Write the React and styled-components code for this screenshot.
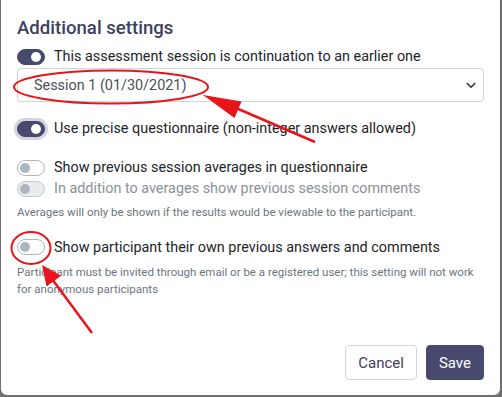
import React from "react";
import styled, { createGlobalStyle, css } from "styled-components";

const GlobalStyle = createGlobalStyle`
  html, body {
    margin: 0;
    padding: 0;
    background: #6f6f6f;
    overflow: hidden;
  }
  * {
    box-sizing: border-box;
  }
`;

const Backdrop = styled.div`
  position: relative;
  width: 502px;
  height: 397px;
  padding: 0 2px 2px 1px;
  font-family: Roboto, "Liberation Sans", sans-serif;
`;

const Dialog = styled.div`
  width: 499px;
  height: 395px;
  background: #fff;
  border-radius: 0 0 6px 6px;
  display: flex;
  flex-direction: column;
  padding: 17px 16px 15px 16px;
`;

const Title = styled.h5`
  margin: 0 0 7px 0;
  font-size: 18.6px;
  line-height: 22px;
  font-weight: 500;
  color: #3e405f;
`;

const SwitchRow = styled.label`
  display: flex;
  align-items: center;
  gap: 9px;
  font-size: 14.4px;
  line-height: 21px;
  color: ${(p) => (p.disabled ? "#8d9099" : "#212529")};
  margin-top: ${(p) => p.gap || 0}px;
`;

const Track = styled.span`
  position: relative;
  flex: none;
  width: 28px;
  height: 16px;
  border-radius: 8px;
  border: 1px solid #adb5bd;
  background: #fff;

  &::after {
    content: "";
    position: absolute;
    top: 2px;
    left: 2px;
    width: 10px;
    height: 10px;
    border-radius: 50%;
    background: #adb5bd;
  }

  ${(p) =>
    p.on &&
    css`
      background: #474a6d;
      border-color: #474a6d;
      &::after {
        left: 13px;
        background: #fff;
      }
    `}

  ${(p) =>
    p.disabled &&
    css`
      background: #e9ecef;
      border-color: #c6cbd1;
    `}

  ${(p) =>
    p.focused &&
    css`
      box-shadow: 0 0 0 3px #d3d4de;
    `}
`;

const Select = styled.div`
  margin-top: 1px;
  height: 34px;
  border: 1px solid #ced4da;
  border-radius: 4px;
  display: flex;
  align-items: center;
  justify-content: space-between;
  padding: 0 6px 0 16px;
  font-size: 14.4px;
  color: #495057;
`;

const Hint = styled.div`
  font-size: 11.5px;
  line-height: ${(p) => p.lh || 16.5}px;
  color: #6c757d;
  margin-top: ${(p) => p.gap || 0}px;
`;

const Footer = styled.div`
  margin-top: auto;
  display: flex;
  justify-content: flex-end;
  gap: 9px;
`;

const Button = styled.button`
  height: 35px;
  padding: 0 12px;
  border-radius: 4px;
  font-family: Roboto, "Liberation Sans", sans-serif;
  font-size: 15px;
  border: 1px solid ${(p) => (p.primary ? "#474a6d" : "#d3d5dd")};
  background: ${(p) => (p.primary ? "#474a6d" : "#fff")};
  color: ${(p) => (p.primary ? "#fff" : "#3e405f")};
`;

const Annotations = styled.svg`
  position: absolute;
  left: 0;
  top: 0;
  pointer-events: none;
`;

const Chevron = () => (
  <svg width="12" height="12" viewBox="0 0 16 16">
    <path d="M3 6l5 5 5-5" fill="none" stroke="#343a40" strokeWidth="2.2" strokeLinecap="round" strokeLinejoin="round" />
  </svg>
);

const Toggle = ({ on, disabled, focused, gap, children }) => (
  <SwitchRow disabled={disabled} gap={gap}>
    <Track on={on} disabled={disabled} focused={focused} />
    <span>{children}</span>
  </SwitchRow>
);

const App = () => (
  <Backdrop>
    <GlobalStyle />
    <Dialog>
      <Title>Additional settings</Title>
      <Toggle on>This assessment session is continuation to an earlier one</Toggle>
      <Select>
        <span>Session 1 (01/30/2021)</span>
        <Chevron />
      </Select>
      <Toggle on focused gap={16}>
        Use precise questionnaire (non-integer answers allowed)
      </Toggle>
      <Toggle gap={18}>Show previous session averages in questionnaire</Toggle>
      <Toggle disabled>In addition to averages show previous session comments</Toggle>
      <Hint gap={5}>Averages will only be shown if the results would be viewable to the participant.</Hint>
      <Toggle gap={16}>Show participant their own previous answers and comments</Toggle>
      <Hint gap={6} lh={17}>
        Participant must be invited through email or be a registered user; this setting will not work
        for anonymous participants
      </Hint>
      <Footer>
        <Button>Cancel</Button>
        <Button primary>Save</Button>
      </Footer>
    </Dialog>
    <Annotations width="502" height="397">
      <g stroke="#e8141b" fill="none" strokeWidth="2">
        <ellipse cx="111" cy="87" rx="97" ry="16.5" />
        <ellipse cx="31" cy="248" rx="19.5" ry="16" />
        <line x1="236" y1="108" x2="315" y2="142" strokeWidth="2.5" />
        <line x1="52" y1="279" x2="92" y2="333" strokeWidth="2.5" />
      </g>
      <g fill="#e8141b">
        <polygon points="203,95 234.5,118 241.5,101.4" />
        <polygon points="42,265 46.5,286.4 61.1,275.8" />
      </g>
    </Annotations>
  </Backdrop>
);

export default App;
